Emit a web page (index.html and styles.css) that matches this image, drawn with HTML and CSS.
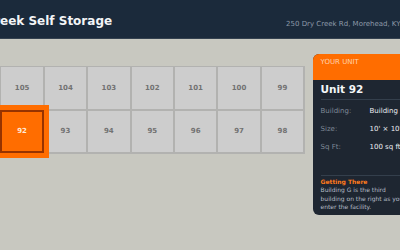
FILE: index.html
```html
<!DOCTYPE html>
<html lang="en">
<head>
    <meta charset="UTF-8">
    <meta name="viewport" content="width=device-width, initial-scale=1.0">
    <title>Dry Creek Self Storage - Unit Map</title>
    <link rel="stylesheet" href="styles.css">
</head>
<body>
<div class="page">

    <!-- Header Section -->
    <header class="site-header">
        <h1 class="site-title">Dry Creek Self Storage</h1>
        <p class="site-address">250 Dry Creek Rd, Morehead, KY 40351</p>
    </header>

    <main class="facility">
        <!-- Building G map -->
        <div class="unit-map">
            <div class="unit-grid">
                <div class="unit-cell">106</div>
                <div class="unit-cell">105</div>
                <div class="unit-cell">104</div>
                <div class="unit-cell">103</div>
                <div class="unit-cell">102</div>
                <div class="unit-cell">101</div>
                <div class="unit-cell">100</div>
                <div class="unit-cell">99</div>
                <div class="unit-cell">91</div>
                <div class="unit-cell unit-cell-selected">92</div>
                <div class="unit-cell">93</div>
                <div class="unit-cell">94</div>
                <div class="unit-cell">95</div>
                <div class="unit-cell">96</div>
                <div class="unit-cell">97</div>
                <div class="unit-cell">98</div>
            </div>
        </div>

        <!-- Unit Card -->
        <aside class="unit-card">
            <div class="unit-card-label">YOUR UNIT</div>
            <div class="unit-card-body">
                <h2 class="unit-name">Unit 92</h2>
                <div class="unit-details">
                    <div class="detail-row"><span class="detail-key">Building:</span><span class="detail-value">Building G</span></div>
                    <div class="detail-row"><span class="detail-key">Size:</span><span class="detail-value">10' × 10'</span></div>
                    <div class="detail-row"><span class="detail-key">Sq Ft:</span><span class="detail-value">100 sq ft</span></div>
                </div>
                <div class="directions">
                    <h3 class="directions-heading">Getting There</h3>
                    <p class="directions-text">Building G is the third building on the right as you enter the facility.</p>
                </div>
            </div>
        </aside>
    </main>

</div>
</body>
</html>
```

FILE: styles.css
```css
/* Global Styles */
body {
    font-family: "DejaVu Sans", sans-serif;
    background-color: #c8c8c0;
    margin: 0;
    padding: 0;
    overflow: hidden;
}
.page {
    width: 480px;
    margin-left: -43.4px;
}

/* Header Section */
.site-header {
    height: 39px;
    box-sizing: border-box;
    display: flex;
    align-items: flex-start;
    padding-top: 14px;
    background-color: #1b2a3b;
    border-bottom: 1px solid #34414f;
}
.site-title {
    font-size: 12px;
    line-height: 14px;
    font-weight: bold;
    color: #f2f4f6;
    margin: 0 0 0 0.8px;
    white-space: nowrap;
}
.site-address {
    font-size: 7px;
    line-height: 8px;
    color: #8d99a8;
    margin: 5.6px 0 0 174px;
    white-space: nowrap;
}

/* Map + Card */
.facility {
    display: flex;
    align-items: flex-start;
    gap: 8px;
    padding-top: 15px;
}
.unit-map {
    margin-top: 12px;
}
.unit-grid {
    display: grid;
    grid-template-columns: repeat(8, 41.4px);
    grid-auto-rows: 41.4px;
    gap: 2px;
    padding: 1.4px;
    background-color: #b2b2b0;
}
.unit-cell {
    display: flex;
    align-items: center;
    justify-content: center;
    background-color: #cdcdcd;
    color: #727272;
    font-size: 7px;
    font-weight: bold;
}
.unit-cell-selected {
    position: relative;
    z-index: 1;
    background-color: #ff6d00;
    color: #ffe8d6;
    outline: 2px solid #973300;
    outline-offset: -1.3px;
    box-shadow: 0 0 0 6px #ff6d00;
}

/* Unit Card */
.unit-card {
    width: 130px;
    flex-shrink: 0;
    background-color: #1e2631;
    border-radius: 6px;
    overflow: hidden;
}
.unit-card-label {
    height: 26px;
    box-sizing: border-box;
    padding: 3.5px 8px 0;
    background-color: #ff6d00;
    color: #ffd2ad;
    font-size: 7px;
    line-height: 9px;
}
.unit-card-body {
    padding: 0 0 3px 8px;
}
.unit-name {
    font-size: 10.5px;
    line-height: 14px;
    font-weight: bold;
    color: #f4f6f8;
    margin: 0;
    padding: 2px 0 3px;
    border-bottom: 1px solid #343f4c;
}
.unit-details {
    padding: 2px 0 19px;
    border-bottom: 1px solid #343f4c;
}
.detail-row {
    display: flex;
    height: 18px;
    align-items: center;
    font-size: 7px;
    white-space: nowrap;
}
.detail-key {
    width: 49px;
    color: #7e8997;
}
.detail-value {
    color: #eceff2;
}
.directions {
    padding-top: 2px;
}
.directions-heading {
    font-size: 6px;
    line-height: 8px;
    font-weight: bold;
    color: #ff7a1c;
    margin: 0;
}
.directions-text {
    font-size: 6px;
    line-height: 8.7px;
    color: #b4bcc6;
    margin: 0;
    width: 88px;
}
```
